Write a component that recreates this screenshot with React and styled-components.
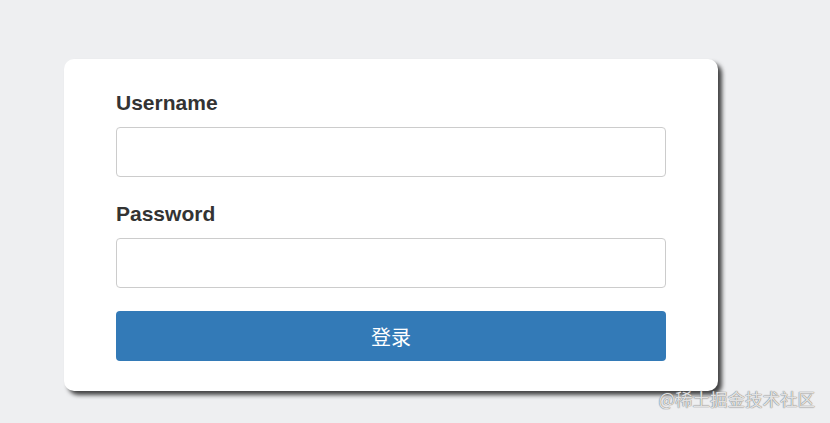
import styled, { createGlobalStyle } from 'styled-components';

const GlobalStyle = createGlobalStyle`
  html, body {
    margin: 0;
    padding: 0;
    background-color: #eeeff1;
    font-family: "Liberation Sans", Arial, "Noto Sans CJK SC", sans-serif;
  }
`;

const Page = styled.div`
  position: relative;
  width: 830px;
  height: 423px;
  padding: 59px 0 0 64px;
  box-sizing: border-box;
  overflow: hidden;
`;

const Card = styled.form`
  width: 654px;
  box-sizing: border-box;
  padding: 32px 52px 30px;
  background-color: #fff;
  border-radius: 10px;
  box-shadow: 4px 4px 4px rgba(0, 0, 0, 0.72);
  display: flex;
  flex-direction: column;
`;

const Group = styled.div`
  display: flex;
  flex-direction: column;
  margin-bottom: ${(p) => p.$gap || 24}px;
`;

const Label = styled.label`
  font-size: 21px;
  line-height: 24px;
  font-weight: bold;
  color: #333;
  margin-bottom: 12px;
`;

const Input = styled.input`
  height: 50px;
  box-sizing: border-box;
  border: 1px solid #ccc;
  border-radius: 4px;
  padding: 0 12px;
  font-size: 18px;
  outline: none;
`;

const Button = styled.button`
  height: 50px;
  border: none;
  border-radius: 4px;
  background-color: #337ab7;
  color: #fff;
  font-size: 20px;
  font-family: "Noto Sans CJK SC", sans-serif;
  cursor: pointer;
`;

const Watermark = styled.span`
  position: absolute;
  right: 15px;
  bottom: 14px;
  font-size: 17.5px;
  line-height: 20px;
  font-family: "Noto Sans CJK SC", sans-serif;
  color: rgba(255, 255, 255, 0.8);
  text-shadow: 0 0 1px #777, 0 0 1px #777;
`;

const App = () => (
  <Page>
    <GlobalStyle />
    <Card onSubmit={(e) => e.preventDefault()}>
      <Group $gap={25}>
        <Label>Username</Label>
        <Input type="text" />
      </Group>
      <Group $gap={23}>
        <Label>Password</Label>
        <Input type="password" />
      </Group>
      <Button type="submit">登录</Button>
    </Card>
    <Watermark>@稀土掘金技术社区</Watermark>
  </Page>
);

export default App;
